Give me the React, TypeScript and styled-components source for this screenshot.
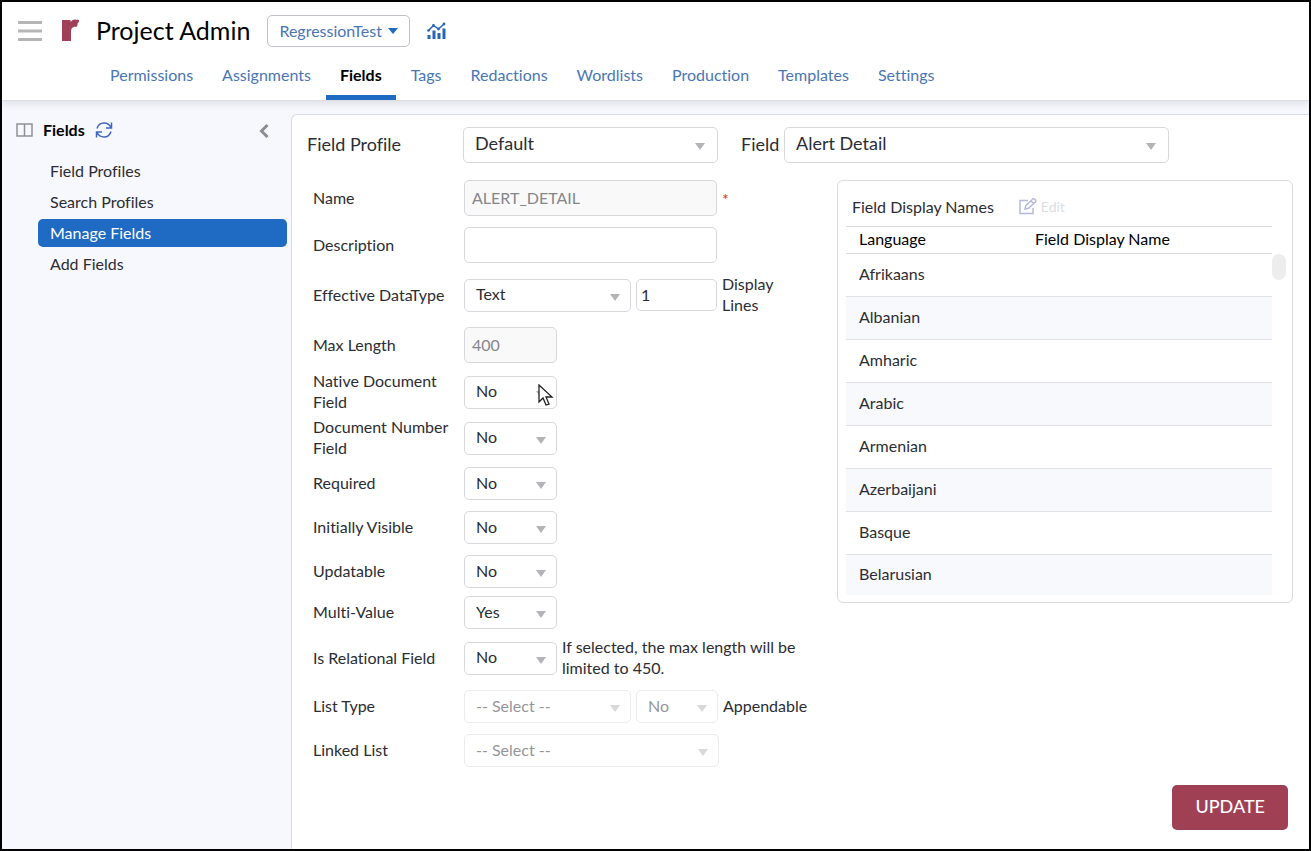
import React, { useId } from "react";
import styled, { createGlobalStyle, css } from "styled-components";

const Global = createGlobalStyle`
  *, *::before, *::after { box-sizing: border-box; }
  body {
    margin: 0;
    background: #f7f8fd;
    color: #2b2d33;
    font-family: Lato, "Open Sans", sans-serif;
    font-size: 16px;
    line-height: 21px;
    font-variant-ligatures: none;
  }
  button, input, select { font: inherit; color: inherit; font-variant-ligatures: none; }
  ul { list-style: none; margin: 0; padding: 0; }
  a { text-decoration: none; color: inherit; }
`;

const Page = styled.div`
  display: flex;
  flex-direction: column;
  min-height: 100vh;
  border: 2px solid #000;
`;

const Header = styled.header`
  height: 99px;
  background: #fff;
  border-bottom: 1px solid #dddfe3;
  box-shadow: 0 2px 8px rgba(60, 70, 90, 0.16);
  z-index: 1;
`;

const TitleBar = styled.div`
  display: flex;
  align-items: center;
  height: 57px;
  padding-left: 16px;
`;

const IconButton = styled.button<{ $color?: string }>`
  display: inline-flex;
  align-items: center;
  padding: 0;
  border: 0;
  background: none;
  color: ${(p) => p.$color ?? "#2a66b8"};
`;

const Logo = styled.svg`
  margin: 0 16px 0 20px;
`;

const Title = styled.h1`
  margin: 0 17px 0 0;
  padding-bottom: 1px;
  font-size: 25px;
  line-height: 32px;
  font-weight: 400;
  color: #000;
`;

const ProjectButton = styled.button`
  display: flex;
  align-items: center;
  gap: 6px;
  height: 32px;
  margin-right: 17px;
  padding: 0 11px;
  border: 1px solid #bfc2c7;
  border-radius: 5px;
  background: #fff;
  color: #4a76b5;
`;

const Tabs = styled.nav`
  display: flex;
  gap: 1px;
  height: 41px;
  padding-left: 94px;
`;

const Tab = styled.a<{ $active?: boolean }>`
  padding: 5px 14px 0;
  color: #4a76b5;
  ${(p) =>
    p.$active &&
    css`
      color: #000;
      font-weight: 700;
      border-bottom: 5px solid #1f6ac2;
    `}
`;

const Body = styled.div`
  display: flex;
  flex: 1;
  padding-top: 13px;
`;

const Sidebar = styled.aside`
  width: 289px;
  flex: none;
  padding: 0 4px 0 14px;
`;

const SidebarHead = styled.div`
  display: flex;
  align-items: center;
  gap: 10px;
  height: 32px;
  padding-right: 18px;
`;

const SidebarTitle = styled.h2`
  margin: 0;
  padding-bottom: 2px;
  font-size: 16px;
  line-height: 21px;
  font-weight: 700;
  color: #000;
`;

const Spacer = styled.span`
  flex: 1;
`;

const Menu = styled.ul`
  display: grid;
  gap: 3px;
  padding: 11px 0 0 22px;
`;

const MenuLink = styled.a<{ $active?: boolean }>`
  display: block;
  padding: 3px 12px 4px;
  border-radius: 5px;
  ${(p) =>
    p.$active &&
    css`
      background: #1f6ac2;
      color: #fff;
    `}
`;

const Panel = styled.main`
  display: flex;
  flex-direction: column;
  flex: 1;
  min-width: 0;
  padding: 12px 16px 19px 15px;
  background: #fff;
  border: 1px solid #d6dae2;
  border-width: 1px 0 0 1px;
  border-radius: 6px 0 0 0;
`;

const FilterBar = styled.div`
  display: flex;
  align-items: center;
  gap: 23px;
  font-size: 18px;
`;

const FilterGroup = styled.div`
  display: flex;
  align-items: center;
`;

const FilterLabel = styled.label<{ $width: number }>`
  width: ${(p) => p.$width}px;
  flex: none;
  padding-bottom: 2px;
`;

const Columns = styled.div`
  display: flex;
  align-items: flex-start;
  justify-content: space-between;
  padding-top: 17px;
`;

const Form = styled.form`
  width: 516px;
  flex: none;
  padding-left: 6px;
`;

const Row = styled.div<{ $gap?: number }>`
  display: flex;
  align-items: center;
  gap: 5px;
  margin-bottom: ${(p) => p.$gap ?? 11}px;
`;

const RowLabel = styled.label`
  width: 146px;
  flex: none;
  margin: -1px 0 1px;
`;

const controlBox = css`
  border: 1px solid #d6d8dc;
  border-radius: 5px;
  background: #fff;
`;

const TextInput = styled.input<{ $width: number; $height?: number; $pad?: number }>`
  ${controlBox}
  width: ${(p) => p.$width}px;
  height: ${(p) => p.$height ?? 36}px;
  flex: none;
  padding: 0 ${(p) => p.$pad ?? 7}px 2px;
  &:disabled {
    background: #f9f9fa;
    color: #85878b;
  }
`;

const SelectWrap = styled.span<{ $width: number; $tall?: boolean; $disabled?: boolean }>`
  position: relative;
  display: block;
  flex: none;
  width: ${(p) => p.$width}px;
  height: ${(p) => (p.$tall ? 36 : 33)}px;
  opacity: ${(p) => (p.$disabled ? 0.5 : 1)};
  &::after {
    content: "";
    position: absolute;
    right: ${(p) => (p.$tall ? 13 : 11)}px;
    bottom: ${(p) => (p.$tall ? 13 : 11)}px;
    border: 5px solid transparent;
    border-top: 7px solid #b2b4b8;
    border-bottom: 0;
    pointer-events: none;
  }
`;

const NativeSelect = styled.select`
  ${controlBox}
  appearance: none;
  width: 100%;
  height: 100%;
  padding: 0 11px 3px;
  &:disabled { opacity: 1; }
`;

const Note = styled.span<{ $width?: number }>`
  max-width: ${(p) => p.$width ?? 250}px;
  margin: -1px 0 1px;
`;

const Required = styled.span`
  color: #e02b2b;
`;

const Names = styled.section`
  width: 456px;
  padding: 10px 20px 7px 8px;
  border: 1px solid #d9dbdf;
  border-radius: 6px;
  position: relative;
`;

const NamesHead = styled.div`
  display: flex;
  align-items: center;
  gap: 25px;
  height: 35px;
  padding: 0 0 5px 6px;
`;

const NamesTitle = styled.h3`
  margin: 0;
  font-size: 16px;
  line-height: 21px;
  font-weight: 400;
`;

const EditButton = styled.button`
  display: flex;
  align-items: center;
  gap: 4px;
  padding: 0;
  border: 0;
  background: none;
  font-size: 14px;
  color: #dcdde2;
`;

const Table = styled.table`
  width: 100%;
  border-collapse: collapse;
  table-layout: fixed;
  th, td { text-align: left; padding: 0 13px 3px; font-weight: 400; }
  th { height: 27px; color: #000; border: 1px solid #d9dbdf; border-width: 1px 0; }
  th:first-child { width: 176px; }
  td { height: 43px; border-bottom: 1px solid #dfe1e5; }
  tbody tr:nth-child(even) { background: #f8f9fd; }
  tbody tr:last-child td { height: 40px; border-bottom: 0; }
`;

const ScrollThumb = styled.span`
  position: absolute;
  top: 73px;
  right: 6px;
  width: 14px;
  height: 26px;
  border-radius: 7px;
  background: #ededee;
`;

const Footer = styled.div`
  display: flex;
  justify-content: flex-end;
  margin-top: auto;
  padding-right: 5px;
`;

const UpdateButton = styled.button`
  height: 45px;
  padding: 0 23px 2px;
  border: 0;
  border-radius: 5px;
  background: #9f4055;
  color: #fff;
  font-size: 18px;
  font-weight: 500;
`;

const Pointer = styled.svg`
  position: absolute;
  left: 74px;
  top: 8px;
  z-index: 2;
`;

type SelectProps = {
  id?: string;
  label?: string;
  width: number;
  options: string[];
  tall?: boolean;
  disabled?: boolean;
  children?: React.ReactNode;
};

const Select = ({ id, label, width, options, tall, disabled, children }: SelectProps) => (
  <SelectWrap $width={width} $tall={tall} $disabled={disabled}>
    <NativeSelect id={id} aria-label={label} disabled={disabled}>
      {options.map((o) => (
        <option key={o}>{o}</option>
      ))}
    </NativeSelect>
    {children}
  </SelectWrap>
);

type FieldProps = {
  label: string;
  gap?: number;
  children: (id: string) => React.ReactNode;
};

const Field = ({ label, gap, children }: FieldProps) => {
  const id = useId();
  return (
    <Row $gap={gap}>
      <RowLabel htmlFor={id}>{label}</RowLabel>
      {children(id)}
    </Row>
  );
};

const tabs = ["Permissions", "Assignments", "Fields", "Tags", "Redactions", "Wordlists", "Production", "Templates", "Settings"];
const menu = ["Field Profiles", "Search Profiles", "Manage Fields", "Add Fields"];
const languages = ["Afrikaans", "Albanian", "Amharic", "Arabic", "Armenian", "Azerbaijani", "Basque", "Belarusian"];
const noYes = ["No", "Yes"];

export default function App() {
  return (
    <>
      <Global />
      <Page>
        <Header>
          <TitleBar>
            <IconButton $color="#b5b5b5" aria-label="Open menu">
              <svg width="24" height="22" viewBox="0 0 24 22" stroke="currentColor" strokeWidth="3">
                <path d="M0 2.500h24M0 11h24M0 19.500h24" />
              </svg>
            </IconButton>
            <Logo width="18" height="24" viewBox="0 0 18 24" fill="#a03f55" aria-hidden="true">
              <path d="M0 1h8.500v2C10 1 12 .3 13.500.5l1 .6 1.200-.6 1.300.8-.2 2-1.200 1-.3 2.800-1.300.9-1.200-.6-1 .6C10 8.500 9 10 9 12.500V22H0z" />
            </Logo>
            <Title>Project Admin</Title>
            <ProjectButton>
              RegressionTest
              <svg width="10" height="6" viewBox="0 0 10 6" fill="#1f6ac2" aria-hidden="true">
                <path d="M0 0h10L5 6z" />
              </svg>
            </ProjectButton>
            <IconButton aria-label="Analytics">
              <svg width="19" height="18" viewBox="0 0 19 18" fill="none" stroke="currentColor">
                <path d="M1.500 8.500l5-5 5 3.500 5.500-5" strokeWidth="1.500" />
                <path d="M2 17v-4M7 17V8.500M12 17v-6M17 17V6.500" strokeWidth="3" />
                <g fill="currentColor" stroke="none">
                  <circle cx="1.500" cy="8.500" r="1.300" />
                  <circle cx="6.500" cy="3.500" r="1.400" />
                  <circle cx="11.500" cy="7" r="1.400" />
                  <circle cx="17" cy="2" r="1.400" />
                </g>
              </svg>
            </IconButton>
          </TitleBar>
          <Tabs>
            {tabs.map((t) => (
              <Tab key={t} href="#" $active={t === "Fields"}>
                {t}
              </Tab>
            ))}
          </Tabs>
        </Header>
        <Body>
          <Sidebar>
            <SidebarHead>
              <svg width="17" height="14" viewBox="0 0 17 14" fill="none" stroke="#8f9196" strokeWidth="1.500" aria-hidden="true">
                <path d="M1 1h15v12H1zM8.500 1v12" />
              </svg>
              <SidebarTitle>Fields</SidebarTitle>
              <IconButton $color="#4166bf" aria-label="Refresh">
                <svg width="18" height="16" viewBox="0 0 18 16" fill="none" stroke="currentColor" strokeWidth="1.500">
                  <path d="M2 6.500C3 3 6 1 9 1c3 0 5.500 1.500 7 4.500M16.500 0.500V6H11M16 9.500C15 13 12 15 9 15c-3 0-5.500-1.500-7-4.500M1.500 15.500V10H7" />
                </svg>
              </IconButton>
              <Spacer />
              <IconButton $color="#8b8d91" aria-label="Collapse sidebar">
                <svg width="10" height="16" viewBox="0 0 10 16" fill="none" stroke="currentColor" strokeWidth="3">
                  <path d="M8.500 3L2.500 9l6 6" />
                </svg>
              </IconButton>
            </SidebarHead>
            <Menu>
              {menu.map((m) => (
                <li key={m}>
                  <MenuLink href="#" $active={m === "Manage Fields"}>
                    {m}
                  </MenuLink>
                </li>
              ))}
            </Menu>
          </Sidebar>
          <Panel>
            <FilterBar>
              <FilterGroup>
                <FilterLabel $width={156} htmlFor="profile">Field Profile</FilterLabel>
                <Select id="profile" width={255} tall options={["Default"]} />
              </FilterGroup>
              <FilterGroup>
                <FilterLabel $width={43} htmlFor="field">Field</FilterLabel>
                <Select id="field" width={385} tall options={["Alert Detail"]} />
              </FilterGroup>
            </FilterBar>
            <Columns>
              <Form>
                <Field label="Name">
                  {(id) => (
                    <>
                      <TextInput id={id} $width={253} disabled defaultValue="ALERT_DETAIL" />
                      <Required>*</Required>
                    </>
                  )}
                </Field>
                <Field label="Description">{(id) => <TextInput id={id} $width={253} />}</Field>
                <Field label="Effective DataType">
                  {(id) => (
                    <>
                      <Select id={id} width={167} options={["Text"]} />
                      <TextInput $width={81} $height={32} $pad={4} defaultValue="1" aria-label="Display lines" />
                      <Note $width={70}>Display Lines</Note>
                    </>
                  )}
                </Field>
                <Field label="Max Length" gap={8}>
                  {(id) => <TextInput id={id} $width={93} disabled defaultValue="400" />}
                </Field>
                <Field label="Native Document Field" gap={4}>
                  {(id) => (
                    <Select id={id} width={93} options={noYes}>
                      <Pointer width="16" height="22" viewBox="0 0 16 22" aria-hidden="true">
                        <path d="M1 1v17l4-4 3 7 3-1-3-7h6z" fill="#fff" stroke="#222" strokeWidth="1.300" />
                      </Pointer>
                    </Select>
                  )}
                </Field>
                <Field label="Document Number Field" gap={8}>{(id) => <Select id={id} width={93} options={noYes} />}</Field>
                <Field label="Required">{(id) => <Select id={id} width={93} options={noYes} />}</Field>
                <Field label="Initially Visible">{(id) => <Select id={id} width={93} options={noYes} />}</Field>
                <Field label="Updatable" gap={8}>{(id) => <Select id={id} width={93} options={noYes} />}</Field>
                <Field label="Multi-Value" gap={8}>{(id) => <Select id={id} width={93} options={["Yes", "No"]} />}</Field>
                <Field label="Is Relational Field">
                  {(id) => (
                    <>
                      <Select id={id} width={93} options={noYes} />
                      <Note>If selected, the max length will be limited to 450.</Note>
                    </>
                  )}
                </Field>
                <Field label="List Type">
                  {(id) => (
                    <>
                      <Select id={id} width={167} options={["-- Select --"]} disabled />
                      <Select label="Appendable" width={82} options={noYes} disabled />
                      <Note>Appendable</Note>
                    </>
                  )}
                </Field>
                <Field label="Linked List">{(id) => <Select id={id} width={255} options={["-- Select --"]} disabled />}</Field>
              </Form>
              <Names>
                <NamesHead>
                  <NamesTitle>Field Display Names</NamesTitle>
                  <EditButton disabled>
                    <svg width="18" height="17" viewBox="0 0 18 17" fill="none" stroke="#b6b9dc" strokeWidth="1.500" aria-hidden="true">
                      <path d="M9 2.500H1v13h13V10M6 11l.8-3.300L13.500 1.200c.8-.6 1.600-.5 2.200 0l.6.600c.6.700.6 1.500 0 2.200L9.500 10.300zM12 3l2.800 2.700" />
                    </svg>
                    Edit
                  </EditButton>
                </NamesHead>
                <Table>
                  <thead>
                    <tr>
                      <th>Language</th>
                      <th>Field Display Name</th>
                    </tr>
                  </thead>
                  <tbody>
                    {languages.map((l) => (
                      <tr key={l}>
                        <td>{l}</td>
                        <td />
                      </tr>
                    ))}
                  </tbody>
                </Table>
                <ScrollThumb />
              </Names>
            </Columns>
            <Footer>
              <UpdateButton>UPDATE</UpdateButton>
            </Footer>
          </Panel>
        </Body>
      </Page>
    </>
  );
}
